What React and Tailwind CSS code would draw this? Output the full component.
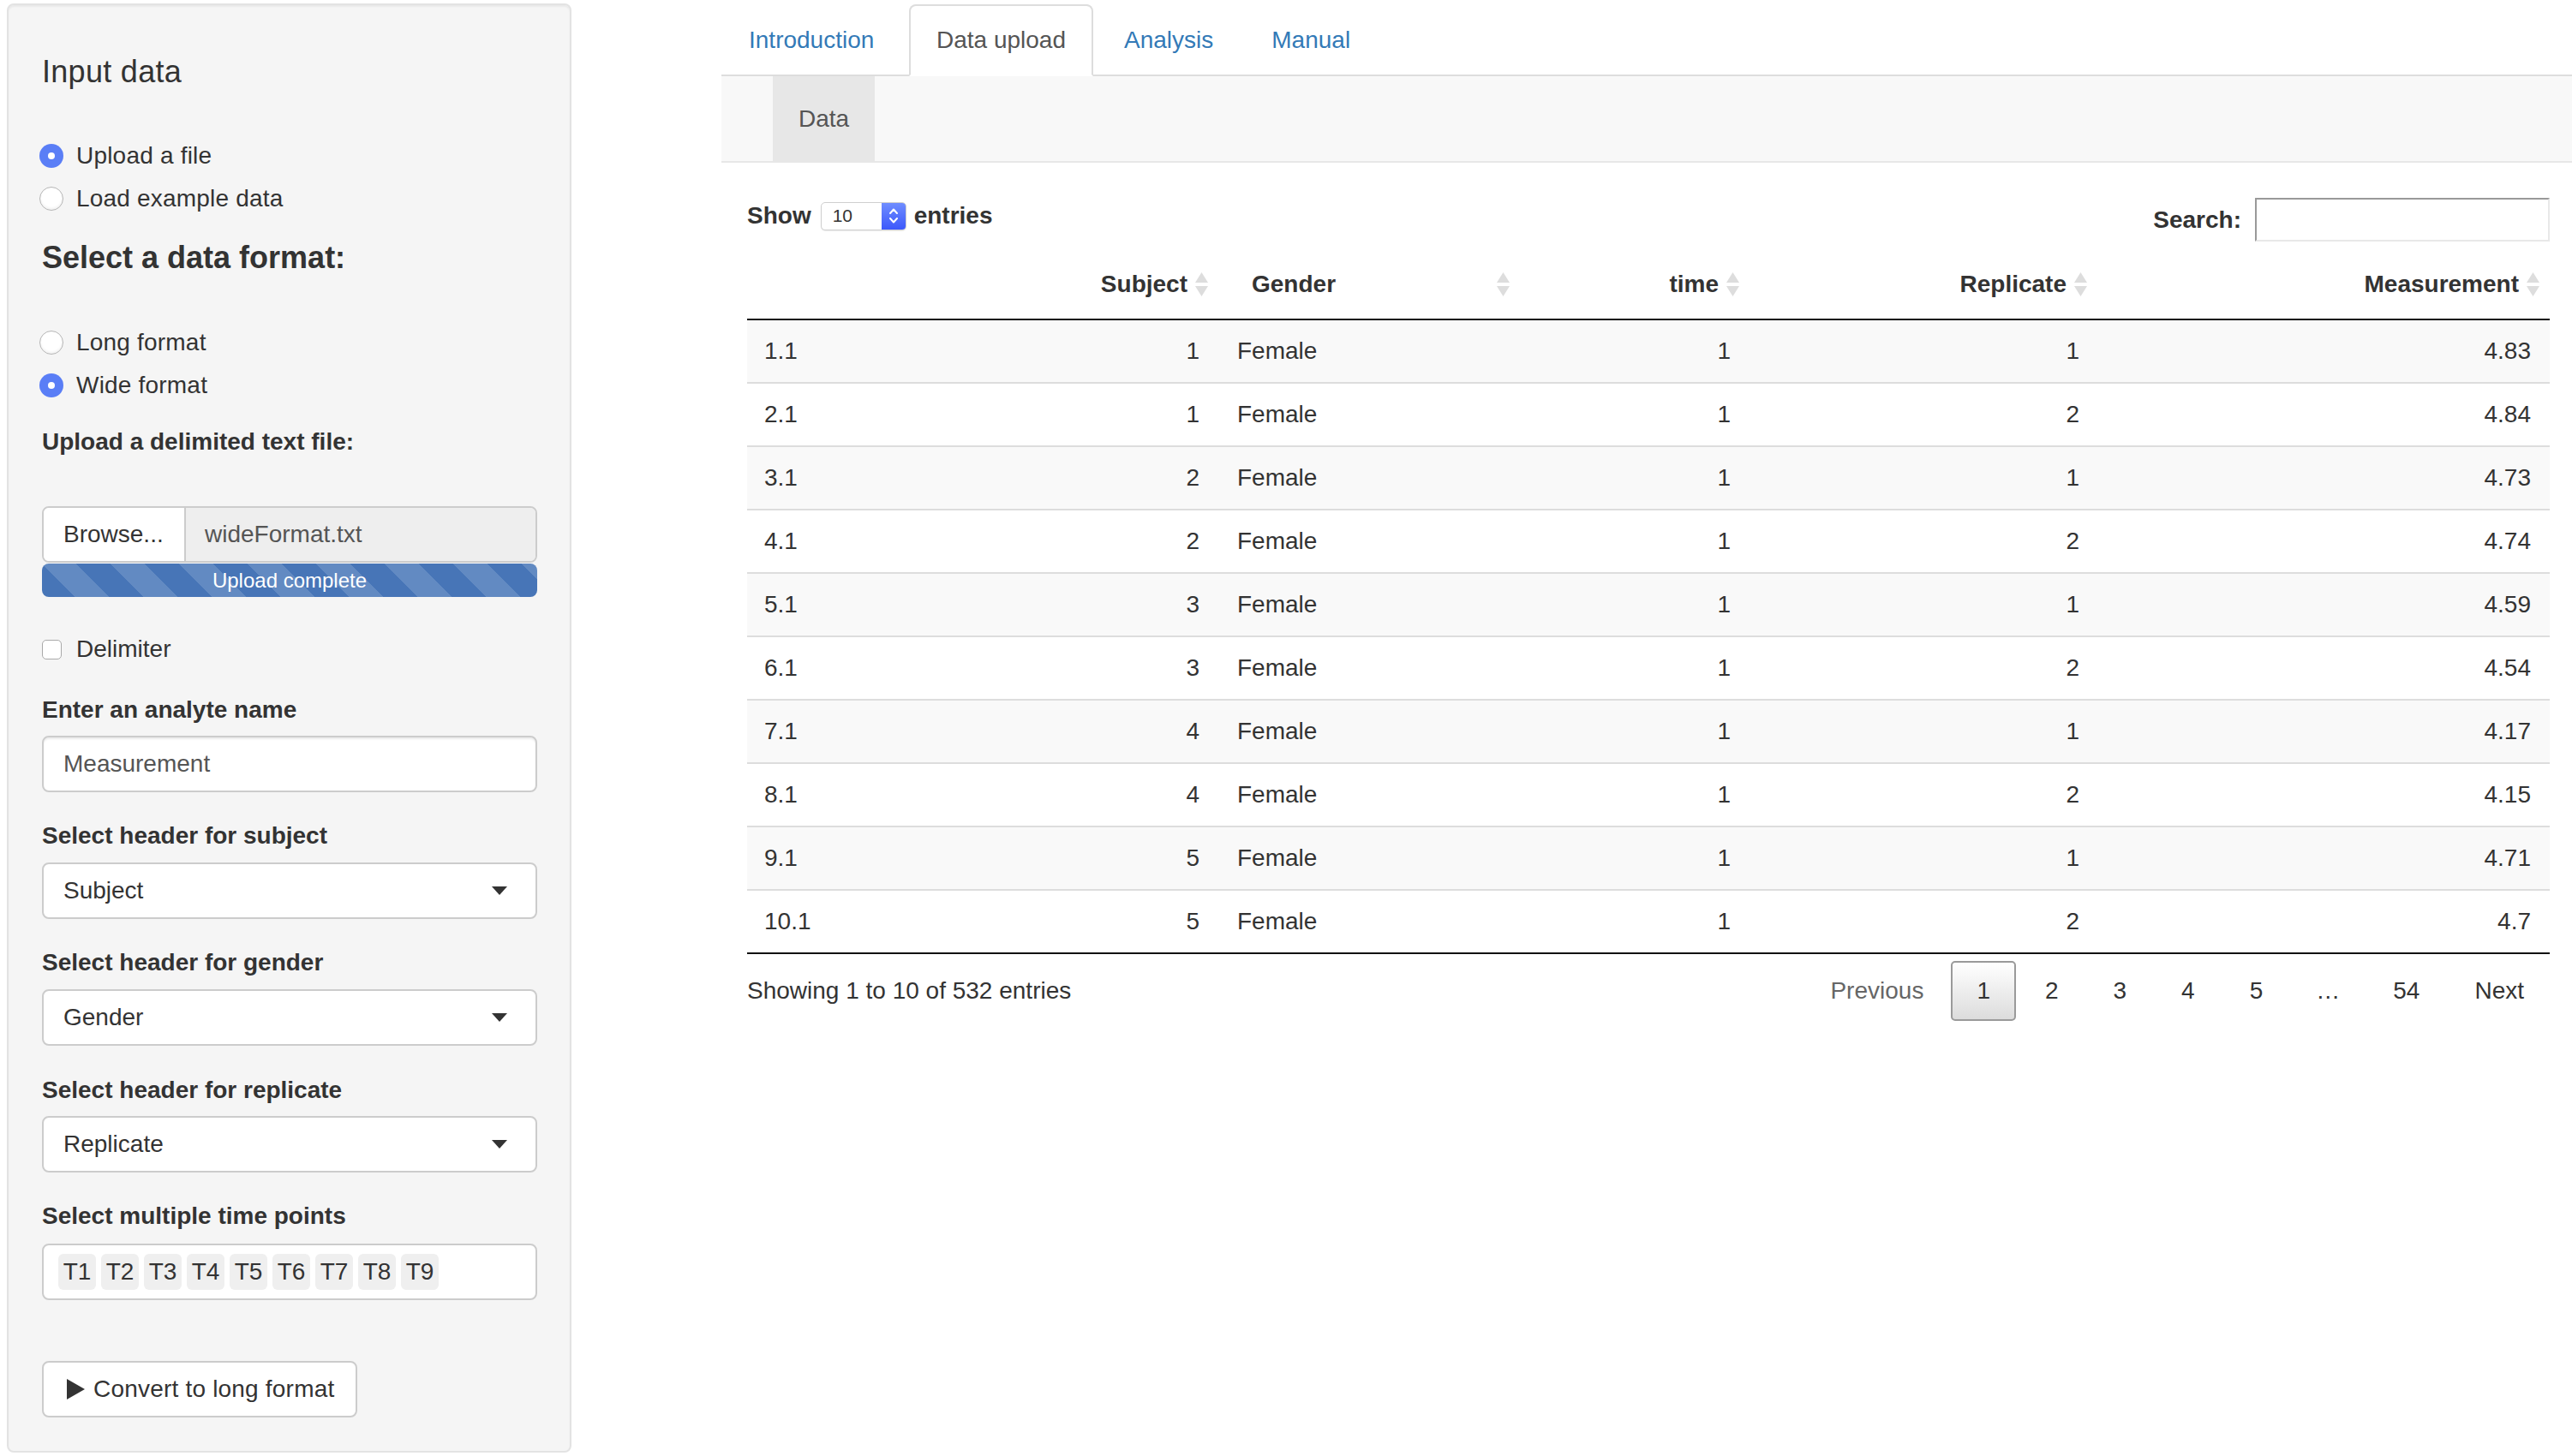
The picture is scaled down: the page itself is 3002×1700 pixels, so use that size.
import React from "react";

function SortIcon() {
  return (
    <svg width="17" height="30" viewBox="0 0 17 30" className="shrink-0">
      <path d="M8.5 1 L16 13 L1 13 Z" fill="#dddddd" />
      <path d="M1 17 L16 17 L8.5 29 Z" fill="#dddddd" />
    </svg>
  );
}

function Caret() {
  return (
    <svg width="18" height="10" viewBox="0 0 18 10" className="shrink-0">
      <path d="M0 0 H18 L9 10 Z" fill="#333333" />
    </svg>
  );
}

function Radio({ checked, label }) {
  return (
    <div className="flex items-center h-[40px]">
      {checked ? (
        <span className="ml-[-3px] w-[28px] h-[28px] rounded-full bg-[#5a7ef6] flex items-center justify-center shrink-0">
          <span className="w-[8px] h-[8px] rounded-full bg-white" />
        </span>
      ) : (
        <span className="ml-[-3px] w-[28px] h-[28px] rounded-full bg-white border border-[#b5b5b5] shadow-[inset_0_-2px_3px_rgba(0,0,0,0.06)] shrink-0" />
      )}
      <span className="ml-[15px] text-[28px] leading-[40px] tracking-[0.2px]">{label}</span>
    </div>
  );
}

function Label({ children, className = "" }) {
  return (
    <div className={"h-[40px] text-[28px] leading-[40px] font-bold " + className}>
      {children}
    </div>
  );
}

function SelectBox({ value, className = "" }) {
  return (
    <div
      className={
        "h-[66px] bg-white border-2 border-[#cccccc] rounded-[8px] flex items-center justify-between pl-[23px] pr-[33px] text-[28px] " +
        className
      }
    >
      <span>{value}</span>
      <Caret />
    </div>
  );
}

const rows = [
  ["1.1", 1, "Female", 1, 1, "4.83"],
  ["2.1", 1, "Female", 1, 2, "4.84"],
  ["3.1", 2, "Female", 1, 1, "4.73"],
  ["4.1", 2, "Female", 1, 2, "4.74"],
  ["5.1", 3, "Female", 1, 1, "4.59"],
  ["6.1", 3, "Female", 1, 2, "4.54"],
  ["7.1", 4, "Female", 1, 1, "4.17"],
  ["8.1", 4, "Female", 1, 2, "4.15"],
  ["9.1", 5, "Female", 1, 1, "4.71"],
  ["10.1", 5, "Female", 1, 2, "4.7"],
];

function RightTh({ children }) {
  return (
    <th className="p-0 py-[20px] border-b-2 border-[#111111] font-bold">
      <div className="flex items-center justify-end pr-[11px] leading-[40px]">
        <span>{children}</span>
        <span className="ml-[8px] flex">
          <SortIcon />
        </span>
      </div>
    </th>
  );
}

export default function App() {
  const tabs = [
    ["Introduction", "w-[215px]"],
    ["Data upload", "w-[215px]"],
    ["Analysis", ""],
    ["Manual", ""],
  ];
  return (
    <div className="flex w-[3002px] h-[1700px] overflow-hidden bg-white text-[#333333] font-['Liberation_Sans',Arial,Helvetica,sans-serif]">
      {/* Sidebar */}
      <div className="w-[842px] shrink-0 pl-[8px] pt-[4px]">
        <div className="w-[659px] h-[1692px] bg-[#f5f5f5] border-2 border-[#e3e3e3] rounded-[8px] shadow-[inset_0_2px_2px_rgba(0,0,0,0.05)] pl-[39px] pr-[38px]">
          <div className="mt-[58px] h-[40px] text-[36px] leading-[40px] tracking-[0.3px]">Input data</div>
          <div className="mt-[58px]">
            <Radio checked label="Upload a file" />
          </div>
          <div className="mt-[10px]">
            <Radio label="Load example data" />
          </div>
          <div className="mt-[29px] h-[40px] text-[36px] leading-[40px] font-bold">
            Select a data format:
          </div>
          <div className="mt-[59px]">
            <Radio label="Long format" />
          </div>
          <div className="mt-[10px]">
            <Radio checked label="Wide format" />
          </div>
          <Label className="mt-[26px]">Upload a delimited text file:</Label>

          <div className="mt-[55px] h-[66px] flex border-2 border-[#cccccc] rounded-[8px] overflow-hidden text-[28px]">
            <div className="bg-white w-[166px] shrink-0 border-r-2 border-[#cccccc] flex items-center pl-[23px]">
              Browse...
            </div>
            <div className="flex-1 bg-[#eeeeee] flex items-center pl-[22px] text-[#555555]">
              wideFormat.txt
            </div>
          </div>
          <div className="mt-[1px] h-[39px] rounded-[8px] bg-[#4775b7] bg-[linear-gradient(45deg,rgba(255,255,255,0.15)_25%,transparent_25%,transparent_50%,rgba(255,255,255,0.15)_50%,rgba(255,255,255,0.15)_75%,transparent_75%,transparent)] bg-[length:80px_80px] flex items-center justify-center text-white text-[24px] leading-[39px]">
            Upload complete
          </div>

          <div className="mt-[41px] h-[40px] flex items-center">
            <span className="w-[23px] h-[23px] rounded-[5px] bg-white border border-[#a9a9a9] shrink-0" />
            <span className="ml-[17px] text-[28px]">Delimiter</span>
          </div>

          <Label className="mt-[31px]">Enter an analyte name</Label>
          <div className="mt-[10px] h-[66px] bg-white border-2 border-[#cccccc] rounded-[8px] shadow-[inset_0_2px_2px_rgba(0,0,0,0.075)] flex items-center pl-[23px] text-[28px] text-[#555555]">
            Measurement
          </div>

          <Label className="mt-[31px]">Select header for subject</Label>
          <SelectBox className="mt-[11px]" value="Subject" />

          <Label className="mt-[31px]">Select header for gender</Label>
          <SelectBox className="mt-[11px]" value="Gender" />

          <Label className="mt-[32px]">Select header for replicate</Label>
          <SelectBox className="mt-[10px]" value="Replicate" />

          <Label className="mt-[31px]">Select multiple time points</Label>
          <div className="mt-[12px] h-[66px] bg-white border-2 border-[#cccccc] rounded-[8px] flex items-center pl-[17px] gap-[6px]">
            {["T1", "T2", "T3", "T4", "T5", "T6", "T7", "T8", "T9"].map((t) => (
              <span
                key={t}
                className="h-[42px] w-[44px] rounded-[6px] bg-[#efefef] flex items-center justify-center text-[28px]"
              >
                {t}
              </span>
            ))}
          </div>

          <div className="mt-[71px] w-[368px] h-[66px] bg-white border-2 border-[#cccccc] rounded-[8px] flex items-center pl-[27px] text-[28px]">
            <svg width="21" height="24" viewBox="0 0 21 24" className="shrink-0">
              <path d="M0 0 L21 12 L0 24 Z" fill="#333333" />
            </svg>
            <span className="ml-[10px] tracking-[0.2px]">Convert to long format</span>
          </div>
        </div>
      </div>

      {/* Main */}
      <div className="flex-1 min-w-0">
        <div className="mt-[5px] h-[84px] flex border-b-2 border-[#dddddd]">
          {tabs.map(([t, w]) => {
            const active = t === "Data upload";
            return (
              <div
                key={t}
                className={
                  "h-[84px] -mb-[2px] mr-[4px] px-[30px] py-[20px] border-2 rounded-t-[8px] text-[28px] leading-[40px] " +
                  w +
                  " " +
                  (active
                    ? "border-[#dddddd] border-b-transparent bg-white text-[#555555]"
                    : "border-transparent text-[#337ab7]")
                }
              >
                {t}
              </div>
            );
          })}
        </div>

        <div className="h-[101px] bg-[#f8f8f8] border-b-2 border-[#e7e7e7] flex">
          <div className="ml-[60px] h-full bg-[#e7e7e7] px-[30px] flex items-center text-[28px] text-[#555555]">
            Data
          </div>
        </div>

        <div className="pl-[30px] pr-[26px]">
          <div className="mt-[41px] h-[51px] flex justify-between items-start">
            <div className="mt-[1px] h-[40px] flex items-center text-[28px] font-bold">
              <span>Show</span>
              <div className="ml-[11px] w-[100px] h-[33px] flex rounded-[5px] border border-[#cfcfcf] overflow-hidden bg-white shadow-[0_1px_1px_rgba(0,0,0,0.08)]">
                <div className="flex-1 flex items-center pl-[13px] text-[21px] font-normal">10</div>
                <div className="w-[28px] h-full bg-[linear-gradient(180deg,#6f8dff,#3c58fb)] flex items-center justify-center">
                  <svg width="12" height="22" viewBox="0 0 12 22">
                    <path d="M2 8 L6 3.5 L10 8" stroke="white" strokeWidth="2" fill="none" strokeLinecap="round" strokeLinejoin="round" />
                    <path d="M2 14 L6 18.5 L10 14" stroke="white" strokeWidth="2" fill="none" strokeLinecap="round" strokeLinejoin="round" />
                  </svg>
                </div>
              </div>
              <span className="ml-[9px]">entries</span>
            </div>
            <div className="h-[51px] flex items-center text-[28px] font-bold">
              <span>Search:</span>
              <div className="ml-[16px] w-[344px] h-[51px] bg-white border-2 border-t-[#999999] border-l-[#999999] border-b-[#e8e8e8] border-r-[#e8e8e8]" />
            </div>
          </div>

          <table className="mt-[10px] w-full table-fixed border-separate border-spacing-0 text-[28px]">
            <colgroup>
              <col className="w-[278px]" />
              <col className="w-[272px]" />
              <col className="w-[352px]" />
              <col className="w-[268px]" />
              <col className="w-[406px]" />
              <col />
            </colgroup>
            <thead>
              <tr>
                <th className="p-0 py-[20px] border-b-2 border-[#111111]">
                  <div className="h-[40px]" />
                </th>
                <RightTh>Subject</RightTh>
                <th className="p-0 py-[20px] border-b-2 border-[#111111] font-bold text-left">
                  <div className="flex items-center justify-between pl-[39px] pr-[11px] leading-[40px]">
                    <span>Gender</span>
                    <SortIcon />
                  </div>
                </th>
                <RightTh>time</RightTh>
                <RightTh>Replicate</RightTh>
                <RightTh>Measurement</RightTh>
              </tr>
            </thead>
            <tbody>
              {rows.map((r, i) => {
                const bg = i % 2 === 0 ? "bg-[#f9f9f9]" : "bg-white";
                const bt = i === 0 ? "" : "border-t-2 border-[#dddddd]";
                const bb = i === rows.length - 1 ? "border-b-2 border-b-[#111111]" : "";
                const base = `py-[16px] leading-[40px] font-normal ${bt} ${bb}`;
                return (
                  <tr key={i} className={bg}>
                    <td className={`${base} pl-[20px] text-left`}>{r[0]}</td>
                    <td className={`${base} pr-[22px] text-right`}>{r[1]}</td>
                    <td className={`${base} pl-[22px] text-left`}>{r[2]}</td>
                    <td className={`${base} pr-[22px] text-right`}>{r[3]}</td>
                    <td className={`${base} pr-[21px] text-right`}>{r[4]}</td>
                    <td className={`${base} pr-[22px] text-right`}>{r[5]}</td>
                  </tr>
                );
              })}
            </tbody>
          </table>

          <div className="mt-[8px] h-[70px] flex items-center justify-between text-[28px]">
            <span>Showing 1 to 10 of 532 entries</span>
            <div className="flex items-center h-[70px]">
              <span className="px-[28px] text-[#666666] leading-[40px]">Previous</span>
              <span className="ml-[4px] h-[70px] px-[28px] flex items-center border-2 border-[#9a9a9a] rounded-[5px] bg-[linear-gradient(180deg,#ffffff,#dcdcdc)]">
                1
              </span>
              {["2", "3", "4", "5"].map((p) => (
                <span key={p} className="ml-[4px] px-[30px] leading-[40px]">
                  {p}
                </span>
              ))}
              <span className="ml-[4px] px-[28px] leading-[40px]">…</span>
              <span className="ml-[4px] px-[30px] leading-[40px]">54</span>
              <span className="ml-[4px] px-[30px] leading-[40px]">Next</span>
            </div>
          </div>
        </div>
      </div>
    </div>
  );
}
